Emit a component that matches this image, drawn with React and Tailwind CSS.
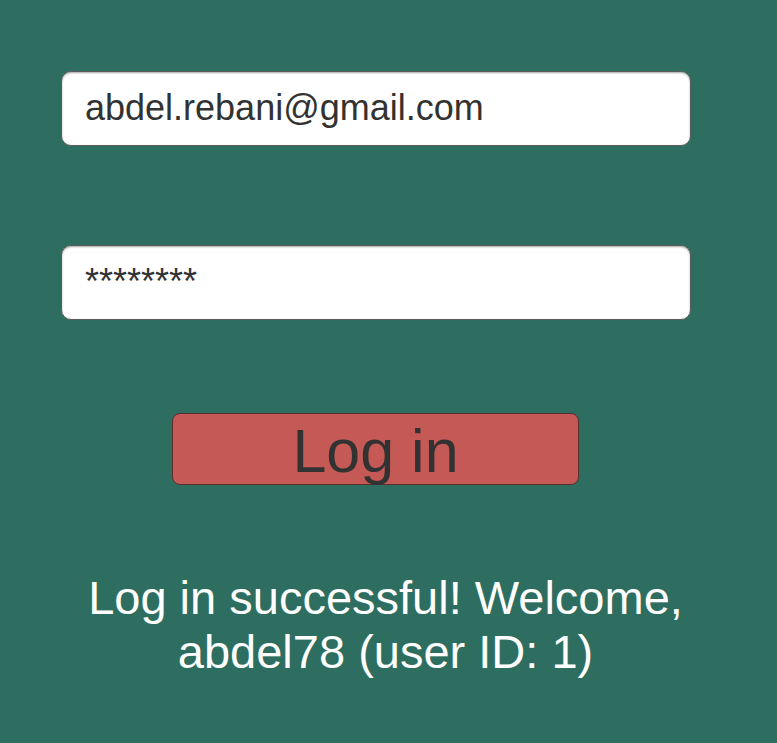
import React from 'react';

const FIELD_CLASS = "ml-[61px] h-[75px] w-[630px] rounded-[10px] border border-[#5b5b5b] bg-white px-[23px] text-[#323232] shadow-[inset_0_1px_2px_rgba(0,0,0,0.35)] outline-none";

export default function App() {
  return (
    <div className="min-h-[743px] w-full bg-[#2e6e60] flex flex-col items-start pt-[71px] font-['Liberation_Sans',Arial,sans-serif]">
      <div className={`${FIELD_CLASS} flex items-center pb-[2px] text-[36px]`}>
        abdel.rebani@gmail.com
      </div>

      <div className={`${FIELD_CLASS} mt-[99px] pt-[18px] text-[36px] leading-none`}>
        ********
      </div>

      <button className="ml-[172px] mt-[93px] h-[72px] w-[407px] rounded-[8px] border border-[#5c2f2f] bg-[#c45956] pt-[4px] text-[61px] leading-none text-[#323232] flex items-center justify-center">
        Log in
      </button>

      <p className="mt-[86px] w-[771px] text-center text-[47px] leading-[54px] text-white">
        Log in successful! Welcome,<br />abdel78 (user ID: 1)
      </p>
    </div>
  );
}
